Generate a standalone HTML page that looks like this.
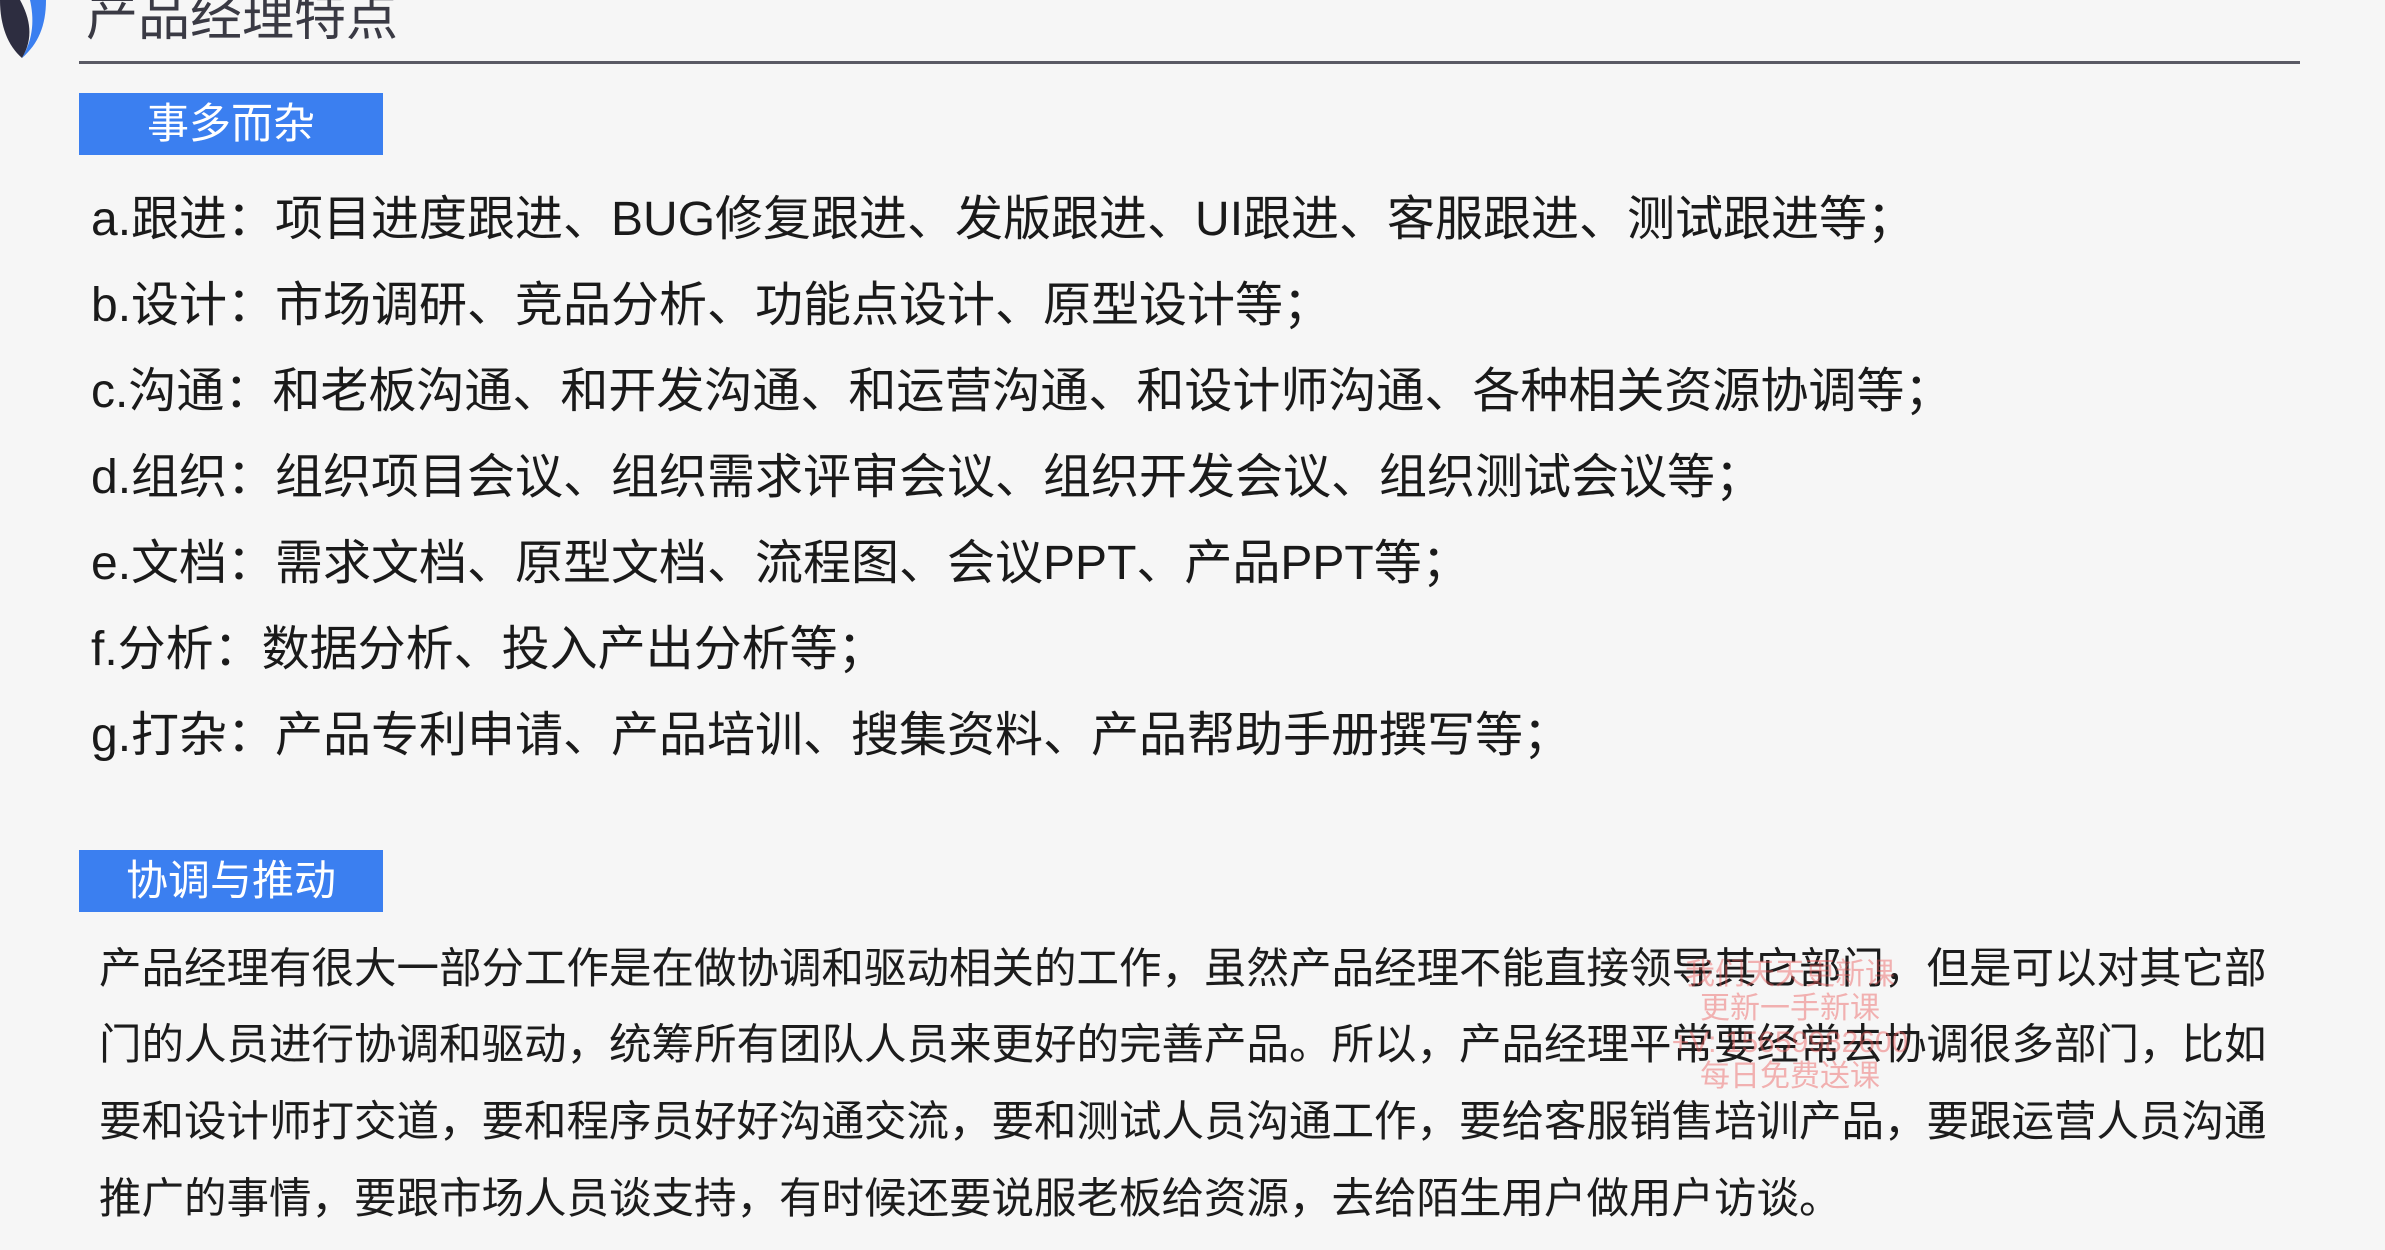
<!DOCTYPE html>
<html><head><meta charset="utf-8"><style>
html,body{margin:0;padding:0;}
body{width:2385px;height:1250px;background:#f6f6f6;position:relative;overflow:hidden;font-family:"Liberation Sans","Noto Sans CJK SC",sans-serif;color:#1a1a1a;}
.abs{position:absolute;white-space:nowrap;}
.title{left:86px;top:-17px;font-size:52px;line-height:70px;color:#3a3a44;}
.rule{left:79px;top:61px;width:2221px;height:3px;background:#5a5a64;}
.tag{background:#3b7ff0;color:#fff;font-size:42px;text-align:center;width:304px;height:62px;line-height:62px;left:79px;}
.li{left:91px;font-size:48px;line-height:60px;}
.p{left:99px;font-size:42.5px;line-height:60px;color:#1c1c1c;}
.wm{color:rgba(235,90,90,0.45);font-size:30px;line-height:34px;text-align:center;left:1660px;width:260px;}
</style></head><body>
<svg class="abs" style="left:0;top:0" width="50" height="62" viewBox="0 0 50 62">
<path d="M0 0 L20 0 C30 18 34 38 22 58 C8 46 0 26 0 0Z" fill="#2d2d40"/>
<path d="M30 0 L46 0 C46 26 38 44 22 58 C34 38 34 18 30 0Z" fill="#3b7ff0"/>
</svg>
<div class="abs title">产品经理特点</div>
<div class="abs rule"></div>
<div class="abs tag" style="top:93px">事多而杂</div>
<div class="abs li" style="top:190px">a.跟进：项目进度跟进、BUG修复跟进、发版跟进、UI跟进、客服跟进、测试跟进等；</div>
<div class="abs li" style="top:276px">b.设计：市场调研、竞品分析、功能点设计、原型设计等；</div>
<div class="abs li" style="top:362px">c.沟通：和老板沟通、和开发沟通、和运营沟通、和设计师沟通、各种相关资源协调等；</div>
<div class="abs li" style="top:448px">d.组织：组织项目会议、组织需求评审会议、组织开发会议、组织测试会议等；</div>
<div class="abs li" style="top:534px">e.文档：需求文档、原型文档、流程图、会议PPT、产品PPT等；</div>
<div class="abs li" style="top:620px">f.分析：数据分析、投入产出分析等；</div>
<div class="abs li" style="top:706px">g.打杂：产品专利申请、产品培训、搜集资料、产品帮助手册撰写等；</div>
<div class="abs tag" style="top:850px">协调与推动</div>
<div class="abs p" style="top:940px">产品经理有很大一部分工作是在做协调和驱动相关的工作，虽然产品经理不能直接领导其它部门，但是可以对其它部</div>
<div class="abs p" style="top:1016px">门的人员进行协调和驱动，统筹所有团队人员来更好的完善产品。所以，产品经理平常要经常去协调很多部门，比如</div>
<div class="abs p" style="top:1093px">要和设计师打交道，要和程序员好好沟通交流，要和测试人员沟通工作，要给客服销售培训产品，要跟运营人员沟通</div>
<div class="abs p" style="top:1170px">推广的事情，要跟市场人员谈支持，有时候还要说服老板给资源，去给陌生用户做用户访谈。</div>
<div class="abs wm" style="top:958px">我们天天更新课<br>更新一手新课<br>+V: 15659982600<br>每日免费送课</div>
</body></html>
